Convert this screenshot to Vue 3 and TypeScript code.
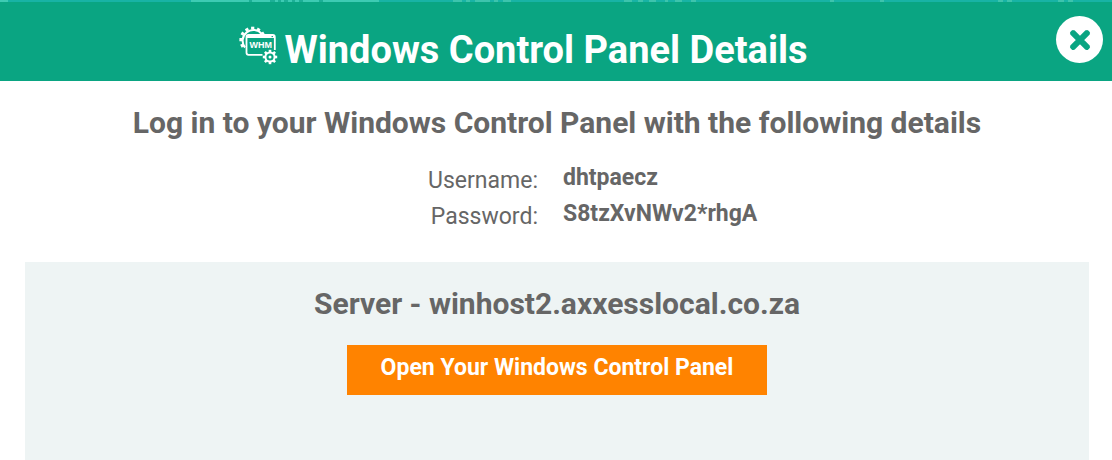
<script setup lang="ts">
interface Credential {
  id: string
  label: string
  value: string
}

const credentials: Credential[] = [
  { id: 'username', label: 'Username:', value: 'dhtpaecz' },
  { id: 'password', label: 'Password:', value: 'S8tzXvNWv2*rhgA' },
]
const server = 'winhost2.axxesslocal.co.za'
const gearAngles: number[] = [0, 45, 90, 135, 180, 225, 270, 315]
const largeGearAngles: number[] = [-118, -88, -58, -29, 0, 29, 58]
</script>

<template>
  <main class="dialog">
    <div class="backdrop-strip">
      <svg width="1112" height="2" viewBox="0 0 1112 2" aria-hidden="true">
        <path fill="#3dcbb3" d="M0 0H8V2H0ZM191 0H379V2H191Z" />
        <path
          stroke="#1caf96"
          stroke-width="2"
          d="M249 1h3M270 1h5M278 1h3M284 1h4M292 1h3M299 1h4M319 1h4"
        />
        <path
          stroke="#3dc4ad"
          stroke-width="2"
          d="M453 1h9M466 1h4M475 1h15M494 1h4M503 1h8M624 1h8M638 1h5M649 1h7M665 1h3M675 1h7M691 1h5M830 1h4M880 1h4M998 1h5M1007 1h5M1058 1h6M1068 1h5"
        />
      </svg>
    </div>
    <header class="header">
      <h1 class="title">
        <svg class="whm" width="40" height="40" viewBox="0 0 40 40" fill="none" aria-hidden="true">
          <g stroke="#fff">
            <path stroke-width="2" d="M7 21.5A10.7 10.7 0 1 1 23.8 8" />
            <g stroke-width="3.2">
              <path
                v-for="angle in largeGearAngles"
                :key="angle"
                :transform="`rotate(${angle} 14.7 14)`"
                d="M14.7 0.7V3.6"
              />
            </g>
            <path stroke-width="1.8" d="M24.5 28.8H10.5Q8.5 28.8 8.5 26.8V11Q8.5 9 10.5 9H34.8Q36.8 9 36.8 11V24" />
            <path stroke-width="2.8" d="M8.5 10.6H36.8" />
            <circle cx="32" cy="31" r="4.6" stroke-width="2" />
            <g stroke-width="2.6">
              <path
                v-for="angle in gearAngles"
                :key="angle"
                :transform="`rotate(${angle} 32 31)`"
                d="M32 23.8V26.5"
              />
            </g>
          </g>
          <path stroke="#0aa582" stroke-width="1" d="M33.5 10.6H35" />
          <circle cx="32" cy="31" r="1.5" fill="#fff" />
          <text class="whm-text" x="22.8" y="22" text-anchor="middle">WHM</text>
        </svg>
        <span>Windows Control Panel Details</span>
      </h1>
      <button class="close" type="button" aria-label="Close">
        <svg width="24" height="24" viewBox="0 0 24 24" aria-hidden="true">
          <path
            d="M4.4 4.4L19.6 19.6M19.6 4.4L4.4 19.6"
            stroke="#0aa582"
            stroke-width="6"
          />
          <path
            d="M3.8 5L5 3.8M19 3.8L20.2 5M20.2 19L19 20.2M5 20.2L3.8 19"
            stroke="#0aa582"
            stroke-width="3.6"
            stroke-linecap="round"
          />
        </svg>
      </button>
    </header>
    <section class="body">
      <h2 class="heading">Log in to your Windows Control Panel with the following details</h2>
      <dl class="details">
        <div v-for="item in credentials" :key="item.id" class="row">
          <dt>{{ item.label }}</dt>
          <dd>{{ item.value }}</dd>
        </div>
      </dl>
      <div class="server">
        <h2 class="heading">Server - {{ server }}</h2>
        <button class="open" type="button">Open Your Windows Control Panel</button>
      </div>
    </section>
  </main>
</template>

<style>
body {
  margin: 0;
  background: #fff;
}
</style>

<style scoped>
.dialog {
  box-sizing: border-box;
  display: flex;
  flex-direction: column;
  min-height: 100vh;
  font-family: Roboto, "Liberation Sans", sans-serif;
  color: #666;
  background: #fff;
}
.backdrop-strip {
  height: 2px;
  overflow: hidden;
  background: #18b3a5;
}
.backdrop-strip svg {
  display: block;
}
.header {
  display: grid;
  grid-template-columns: 56px 1fr 56px;
  align-items: center;
  box-sizing: border-box;
  height: 79px;
  padding-bottom: 4px;
  background: #0aa582;
}
.title {
  grid-column: 2;
  display: flex;
  justify-content: center;
  align-items: center;
  gap: 6px;
  margin: 0;
  padding: 20px 66px 0 0;
  font-size: 38px;
  line-height: 40px;
  font-weight: 700;
  color: #fff;
  white-space: nowrap;
}
.whm {
  flex: none;
  margin-bottom: 8px;
}
.whm-text {
  font: 700 9px "Liberation Sans", sans-serif;
  fill: #fff;
}
.close {
  display: flex;
  align-items: center;
  justify-content: center;
  width: 47px;
  height: 47px;
  padding: 0;
  border: 0;
  border-radius: 50%;
  background: #fff;
  cursor: pointer;
}
.body {
  display: flex;
  flex: 1;
  flex-direction: column;
  padding: 24px 23px 0 25px;
}
.heading {
  margin: 0;
  font-size: 30px;
  line-height: 36px;
  font-weight: 700;
  text-align: center;
}
.details {
  margin: 21px 0 28px;
  font-size: 23px;
  line-height: 32px;
}
.row {
  display: grid;
  grid-template-columns: 513fr 526fr;
  column-gap: 25px;
  height: 36px;
}
.row dt {
  padding-top: 3px;
  text-align: right;
}
.row dd {
  margin: 0;
  font-weight: 700;
}
.server {
  display: flex;
  flex: 1;
  flex-direction: column;
  align-items: center;
  gap: 23px;
  padding: 24px 0;
  background: #eef4f4;
}
.open {
  width: 420px;
  height: 50px;
  padding: 0 0 4px;
  border: 0;
  background: #ff8300;
  color: #fff;
  font-family: inherit;
  font-size: 23px;
  line-height: 32px;
  font-weight: 700;
  cursor: pointer;
}
</style>
